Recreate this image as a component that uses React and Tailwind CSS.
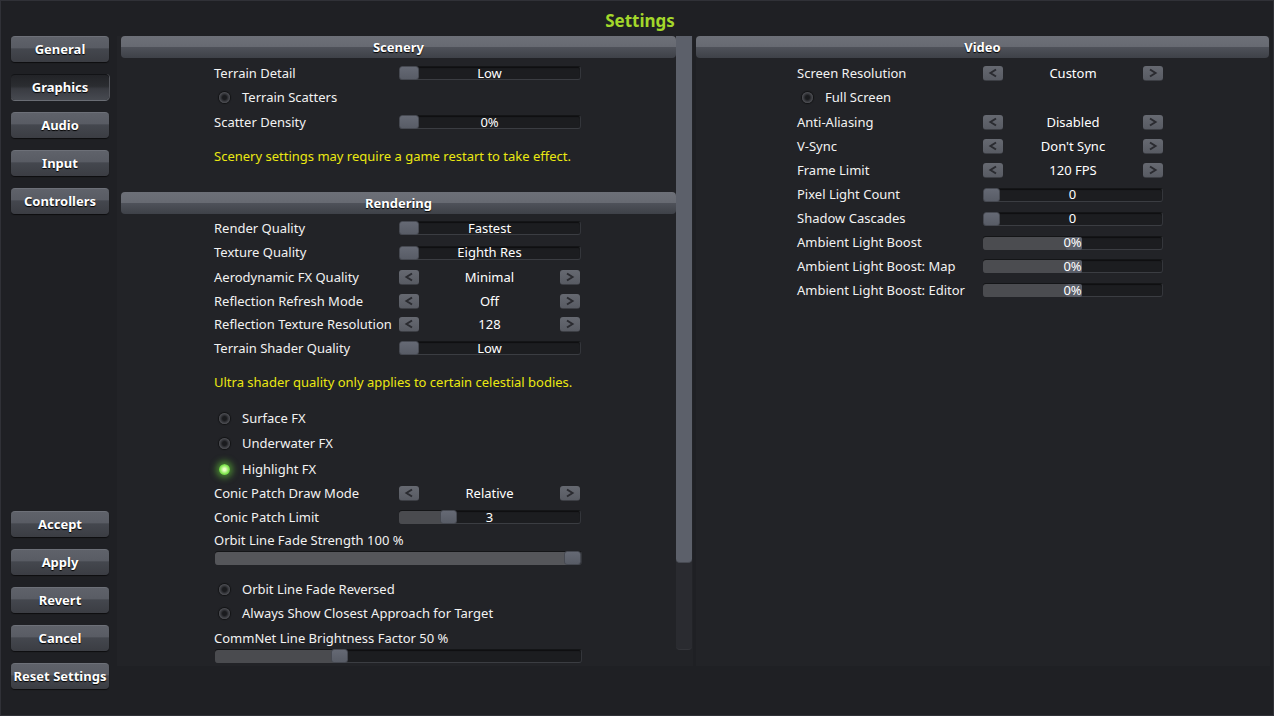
import React from "react";

const BTN =
  "h-[26px] w-[98px] rounded-[4px] flex items-center justify-center text-[13px] font-bold text-white [text-shadow:0_1px_1px_#000] border-t border-[#6d7078] bg-[linear-gradient(#5f626a_0%,#595c64_42%,#44474e_48%,#3b3d43_100%)] shadow-[0_1px_1px_rgba(0,0,0,0.6)]";
const BTN_ACTIVE =
  "h-[26px] w-[98px] rounded-[4px] flex items-center justify-center text-[13px] font-bold text-white [text-shadow:0_1px_1px_#000] border-t border-[#121316] bg-[linear-gradient(#222327_0%,#2b2d31_45%,#393b41_55%,#474a51_100%)] shadow-[0_1px_0_#6a6d74,1px_0_0_#55575d]";

function NavButton({ children, active }) {
  return <div className={active ? BTN_ACTIVE : BTN}>{children}</div>;
}

function Header({ children }) {
  return (
    <div className="h-[22px] shrink-0 rounded-[4px] flex items-center justify-center pt-[1px] text-[13px] font-bold text-white [text-shadow:0_1px_1px_#000] bg-[linear-gradient(#6d7078_0%,#676a72_48%,#4e5159_52%,#3e4148_100%)]">
      {children}
    </div>
  );
}

function Row({ h, children, pad = "pl-[93px]" }) {
  return <div className={`${h} ${pad} shrink-0 flex items-center`}>{children}</div>;
}

function Label({ children, w = "w-[185px]" }) {
  return <div className={`${w} shrink-0 text-[13px] leading-none text-[#f2f2f2]`}>{children}</div>;
}

function Track({ children, w = "w-[182px]" }) {
  return (
    <div className={`relative h-[14px] ${w} shrink-0 rounded-[3px] bg-[#1c1d20] border-t border-t-[#141517] border-b border-b-[#3b3d42] border-r border-r-[#34363b] shadow-[inset_0_1px_1px_rgba(0,0,0,0.5)]`}>
      {children}
    </div>
  );
}

function Thumb({ pos = "left-0", w = "w-[20px]" }) {
  return (
    <div
      className={`absolute -top-[1px] ${pos} h-[14px] ${w} rounded-[3px] bg-[linear-gradient(#656974,#585c66)] border border-[#464951]`}
    />
  );
}

function ValueText({ children }) {
  return (
    <div className="absolute inset-0 flex items-center justify-center text-[13px] leading-none text-white">
      {children}
    </div>
  );
}

function ValueSlider({ value }) {
  return (
    <Track>
      <Thumb />
      <ValueText>{value}</ValueText>
    </Track>
  );
}

function Arrow({ dir }) {
  return (
    <div className="h-[15px] w-[20px] shrink-0 rounded-[3px] bg-[linear-gradient(#666971,#585b63)] border-b border-[#3c3e44] flex items-center justify-center">
      <svg width="12" height="10" viewBox="0 0 12 10">
        {dir === "<" ? (
          <polyline points="9,1.5 3.5,5 9,8.5" fill="none" stroke="#2a2b30" strokeWidth="2" />
        ) : (
          <polyline points="3,1.5 8.5,5 3,8.5" fill="none" stroke="#2a2b30" strokeWidth="2" />
        )}
      </svg>
    </div>
  );
}

function Stepper({ value, w = "w-[181px]" }) {
  return (
    <div className={`${w} shrink-0 flex items-center`}>
      <Arrow dir="<" />
      <div className="flex-1 text-center text-[13px] leading-none text-white">{value}</div>
      <Arrow dir=">" />
    </div>
  );
}

function Toggle({ children, on }) {
  return (
    <div className="flex items-center">
      <div
        className={
          on
            ? "ml-[5px] h-[11px] w-[11px] rounded-full bg-[radial-gradient(circle,#e8ffc4_15%,#84e853_55%,#46a628_100%)] shadow-[0_0_6px_3px_rgba(110,230,60,0.5)]"
            : "ml-[5px] h-[11px] w-[11px] rounded-full bg-[radial-gradient(circle,#1a1b1e_25%,#3e3f44_55%,#77787d_100%)] shadow-[0_0_1px_1px_rgba(0,0,0,0.5)]"
        }
      />
      <div className="ml-[12px] text-[13px] leading-none text-[#f2f2f2]">{children}</div>
    </div>
  );
}

function Yellow({ children }) {
  return <div className="text-[13px] leading-none text-[#ebe812]">{children}</div>;
}

function AmbientSlider() {
  return (
    <Track w="w-[180px]">
      <div className="absolute left-0 top-0 h-[13px] w-[84px] rounded-l-[3px] bg-[#4b4c50]" />
      <div className="absolute left-[83px] top-0 h-[13px] w-[16px] rounded-[2px] bg-[#5a5e68]" />
      <ValueText>0%</ValueText>
    </Track>
  );
}

export default function App() {
  return (
    <div className="w-[1274px] h-[716px] bg-[#1f2024] border border-[#303137] font-['Noto_Sans',sans-serif] text-white flex flex-col overflow-hidden">
      <div className="h-[35px] shrink-0 flex items-center justify-center pl-[6px] pt-[4px] text-[17px] font-bold text-[#a3d72b]">
        Settings
      </div>
      <div className="flex flex-1">
        {/* left nav */}
        <div className="w-[116px] shrink-0 pl-[10px] pb-[26px] flex flex-col justify-between">
          <div className="flex flex-col gap-[12px]">
            <NavButton>General</NavButton>
            <NavButton active>Graphics</NavButton>
            <NavButton>Audio</NavButton>
            <NavButton>Input</NavButton>
            <NavButton>Controllers</NavButton>
          </div>
          <div className="flex flex-col gap-[12px]">
            <NavButton>Accept</NavButton>
            <NavButton>Apply</NavButton>
            <NavButton>Revert</NavButton>
            <NavButton>Cancel</NavButton>
            <NavButton>Reset Settings</NavButton>
          </div>
        </div>

        {/* left panel */}
        <div className="w-[576px] h-[630px] shrink-0 bg-[#222327] flex overflow-hidden">
          <div className="flex-1 pl-[4px] flex flex-col overflow-hidden">
            <Header>Scenery</Header>
            <div className="h-[3px] shrink-0" />
            <Row h="h-[24px]">
              <Label>Terrain Detail</Label>
              <ValueSlider value="Low" />
            </Row>
            <Row h="h-[25px]">
              <Toggle>Terrain Scatters</Toggle>
            </Row>
            <Row h="h-[24px]">
              <Label>Scatter Density</Label>
              <ValueSlider value="0%" />
            </Row>
            <div className="h-[10px] shrink-0" />
            <Row h="h-[24px]">
              <Yellow>Scenery settings may require a game restart to take effect.</Yellow>
            </Row>
            <div className="h-[24px] shrink-0" />
            <Header>Rendering</Header>
            <div className="h-[2px] shrink-0" />
            <Row h="h-[24px]">
              <Label>Render Quality</Label>
              <ValueSlider value="Fastest" />
            </Row>
            <Row h="h-[25px]">
              <Label>Texture Quality</Label>
              <ValueSlider value="Eighth Res" />
            </Row>
            <Row h="h-[24px]">
              <Label>Aerodynamic FX Quality</Label>
              <Stepper value="Minimal" />
            </Row>
            <Row h="h-[24px]">
              <Label>Reflection Refresh Mode</Label>
              <Stepper value="Off" />
            </Row>
            <Row h="h-[23px]">
              <Label>Reflection Texture Resolution</Label>
              <Stepper value="128" />
            </Row>
            <Row h="h-[24px]">
              <Label>Terrain Shader Quality</Label>
              <ValueSlider value="Low" />
            </Row>
            <div className="h-[10px] shrink-0" />
            <Row h="h-[24px]">
              <Yellow>Ultra shader quality only applies to certain celestial bodies.</Yellow>
            </Row>
            <div className="h-[12px] shrink-0" />
            <Row h="h-[25px]">
              <Toggle>Surface FX</Toggle>
            </Row>
            <Row h="h-[25px]">
              <Toggle>Underwater FX</Toggle>
            </Row>
            <Row h="h-[26px]">
              <Toggle on>Highlight FX</Toggle>
            </Row>
            <Row h="h-[23px]">
              <Label>Conic Patch Draw Mode</Label>
              <Stepper value="Relative" />
            </Row>
            <Row h="h-[24px]">
              <Label>Conic Patch Limit</Label>
              <Track>
                <div className="absolute left-0 top-0 h-[13px] w-[46px] rounded-l-[3px] bg-[#4a4b4f]" />
                <Thumb pos="left-[41px]" w="w-[17px]" />
                <ValueText>3</ValueText>
              </Track>
            </Row>
            <Row h="h-[22px]">
              <div className="text-[13px] leading-none text-[#f2f2f2]">Orbit Line Fade Strength 100 %</div>
            </Row>
            <Row h="h-[14px]" pad="pl-[94px]">
              <Track w="w-[367px]">
                <div className="absolute left-0 top-0 h-[13px] w-[355px] rounded-l-[3px] bg-[#55565a]" />
                <Thumb pos="right-0" w="w-[17px]" />
              </Track>
            </Row>
            <div className="h-[12px] shrink-0" />
            <Row h="h-[24px]">
              <Toggle>Orbit Line Fade Reversed</Toggle>
            </Row>
            <Row h="h-[24px]">
              <Toggle>Always Show Closest Approach for Target</Toggle>
            </Row>
            <div className="h-[2px] shrink-0" />
            <Row h="h-[22px]">
              <div className="text-[13px] leading-none text-[#f2f2f2]">CommNet Line Brightness Factor 50 %</div>
            </Row>
            <Row h="h-[14px]" pad="pl-[94px]">
              <Track w="w-[367px]">
                <div className="absolute left-0 top-0 h-[13px] w-[122px] rounded-l-[3px] bg-[#4a4b4f]" />
                <Thumb pos="left-[116px]" w="w-[17px]" />
              </Track>
            </Row>
          </div>
          {/* scrollbar */}
          <div className="w-[17px] shrink-0 flex flex-col">
            <div className="h-[614px] w-[16px] rounded-b-[4px] bg-[#2a2b30] border-b border-[#34353a] flex flex-col">
              <div className="h-[527px] w-[16px] rounded-b-[4px] bg-[#5c606a] border-b border-[#474a52]" />
            </div>
          </div>
        </div>

        <div className="w-[3px] shrink-0" />

        {/* right panel */}
        <div className="w-[574px] h-[630px] shrink-0 bg-[#222327] flex flex-col pr-[1px] overflow-hidden">
          <Header>Video</Header>
          <div className="h-[3px] shrink-0" />
          <Row h="h-[24px]" pad="pl-[101px]">
            <Label w="w-[186px]">Screen Resolution</Label>
            <Stepper value="Custom" w="w-[180px]" />
          </Row>
          <Row h="h-[25px]" pad="pl-[101px]">
            <Toggle>Full Screen</Toggle>
          </Row>
          <Row h="h-[24px]" pad="pl-[101px]">
            <Label w="w-[186px]">Anti-Aliasing</Label>
            <Stepper value="Disabled" w="w-[180px]" />
          </Row>
          <Row h="h-[24px]" pad="pl-[101px]">
            <Label w="w-[186px]">V-Sync</Label>
            <Stepper value="Don't Sync" w="w-[180px]" />
          </Row>
          <Row h="h-[25px]" pad="pl-[101px]">
            <Label w="w-[186px]">Frame Limit</Label>
            <Stepper value="120 FPS" w="w-[180px]" />
          </Row>
          <Row h="h-[23px]" pad="pl-[101px]">
            <Label w="w-[186px]">Pixel Light Count</Label>
            <Track w="w-[180px]">
              <Thumb w="w-[17px]" />
              <ValueText>0</ValueText>
            </Track>
          </Row>
          <Row h="h-[25px]" pad="pl-[101px]">
            <Label w="w-[186px]">Shadow Cascades</Label>
            <Track w="w-[180px]">
              <Thumb w="w-[17px]" />
              <ValueText>0</ValueText>
            </Track>
          </Row>
          <Row h="h-[23px]" pad="pl-[101px]">
            <Label w="w-[186px]">Ambient Light Boost</Label>
            <AmbientSlider />
          </Row>
          <Row h="h-[24px]" pad="pl-[101px]">
            <Label w="w-[186px]">Ambient Light Boost: Map</Label>
            <AmbientSlider />
          </Row>
          <Row h="h-[24px]" pad="pl-[101px]">
            <Label w="w-[186px]">Ambient Light Boost: Editor</Label>
            <AmbientSlider />
          </Row>
        </div>
      </div>
    </div>
  );
}
